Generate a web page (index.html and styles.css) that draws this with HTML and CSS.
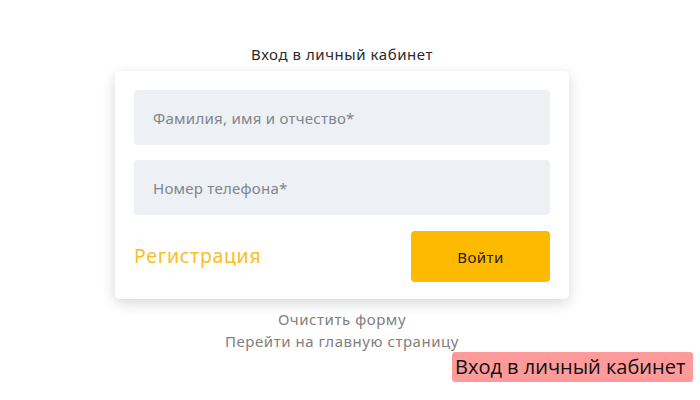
FILE: index.html
```html
<!DOCTYPE html>
<html lang="ru">
<head>
<meta charset="utf-8">
<link rel="stylesheet" href="styles.css">
</head>
<body>
<div class="page">
  <h1 class="title">Вход в личный кабинет</h1>
  <form class="card">
    <div class="field">Фамилия, имя и отчество*</div>
    <div class="field">Номер телефона*</div>
    <div class="actions">
      <a class="register">Регистрация</a>
      <button class="login" type="button">Войти</button>
    </div>
  </form>
  <div class="links">
    <a class="link">Очистить форму</a>
    <a class="link">Перейти на главную страницу</a>
  </div>
</div>
<div class="badge">Вход в личный кабинет</div>
</body>
</html>
```

FILE: styles.css
```css
html, body {
  margin: 0;
  padding: 0;
  background: #ffffff;
}
body {
  width: 700px;
  height: 400px;
  position: relative;
  overflow: hidden;
  font-family: "Noto Sans", "Open Sans", sans-serif;
}
.page {
  width: 454px;
  margin-left: 115px;
  display: flex;
  flex-direction: column;
  align-items: stretch;
}
.title {
  margin: 0;
  padding-top: 43px;
  height: 28px;
  font-size: 15px;
  font-weight: 400;
  line-height: 22px;
  letter-spacing: 0.55px;
  color: #2a2a2a;
  text-align: center;
}
.card {
  margin: 0;
  background: #ffffff;
  border-radius: 5px;
  box-shadow: 0 4px 14px rgba(0, 0, 0, 0.16);
  padding: 19px 19px 17px;
  display: flex;
  flex-direction: column;
  gap: 15px;
}
.field {
  height: 55px;
  background: #edf0f5;
  border-radius: 4px;
  display: flex;
  align-items: center;
  padding-left: 19px;
  font-size: 15px;
  letter-spacing: 0.25px;
  color: #80858e;
}
.actions {
  margin-top: 1px;
  display: flex;
  align-items: center;
  justify-content: space-between;
}
.register {
  font-size: 19.5px;
  letter-spacing: 0.7px;
  color: #fbbd1f;
  padding-bottom: 2px;
}
.login {
  width: 139px;
  height: 51px;
  border: none;
  border-radius: 4px;
  background: #fdba00;
  color: #2b2006;
  font-family: inherit;
  font-size: 15px;
  letter-spacing: 0.4px;
}
.links {
  margin-top: 9px;
  display: flex;
  flex-direction: column;
  align-items: center;
}
.link {
  font-size: 15px;
  line-height: 22px;
  letter-spacing: 0.55px;
  color: #808080;
}
.badge {
  position: absolute;
  left: 452px;
  top: 352px;
  width: 241px;
  height: 30px;
  box-sizing: border-box;
  padding-left: 3px;
  background: #ff9a9a;
  border-radius: 3px;
  font-family: "Open Sans", sans-serif;
  font-size: 20px;
  line-height: 30px;
  color: #111111;
  white-space: nowrap;
}
```
